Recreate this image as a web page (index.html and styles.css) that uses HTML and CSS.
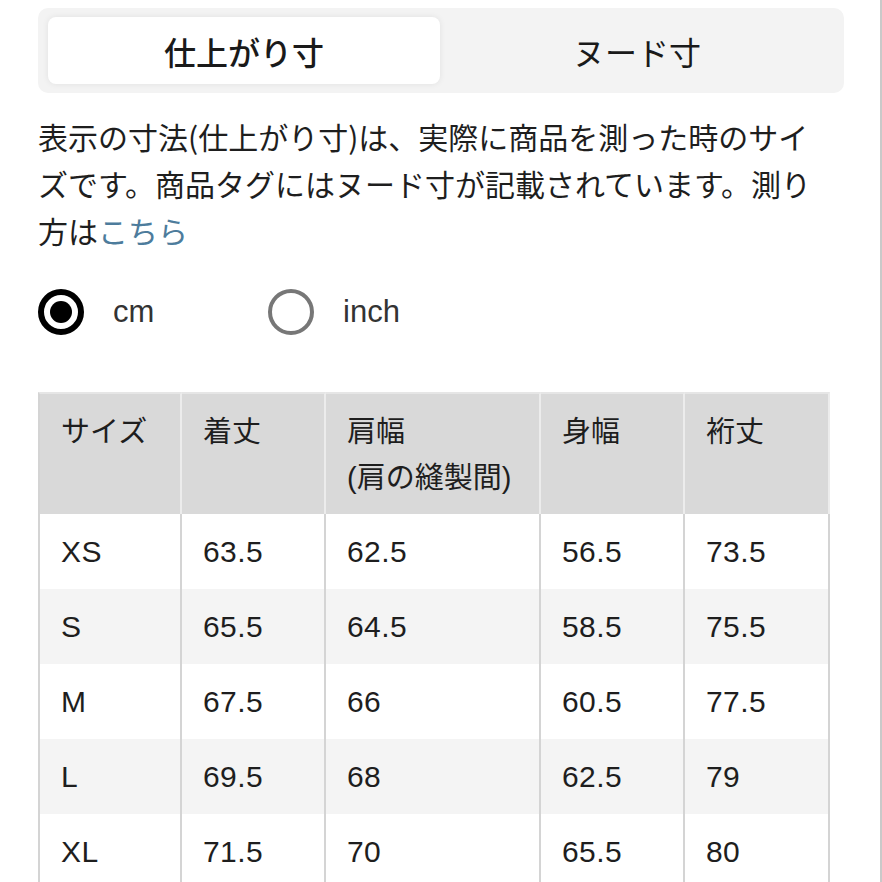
FILE: index.html
```html
<!DOCTYPE html>
<html lang="ja">
<head>
<meta charset="utf-8">
<link rel="stylesheet" href="styles.css">
</head>
<body>
<div class="page">
  <div class="segment">
    <div class="seg-tab active">仕上がり寸</div>
    <div class="seg-tab">ヌード寸</div>
  </div>
  <p class="note">表示の寸法(仕上がり寸)は、実際に商品を測った時のサイ<br>ズです。商品タグにはヌード寸が記載されています。測り<br>方は<a class="link" href="#">こちら</a></p>
  <div class="units">
    <div class="unit"><span class="radio checked"><span class="dot"></span></span><span class="unit-label">cm</span></div>
    <div class="unit"><span class="radio"></span><span class="unit-label">inch</span></div>
  </div>
  <table class="sizes">
    <thead>
      <tr>
        <th class="c1">サイズ</th>
        <th class="c2">着丈</th>
        <th class="c3">肩幅<br>(肩の縫製間)</th>
        <th class="c4">身幅</th>
        <th class="c5">裄丈</th>
      </tr>
    </thead>
    <tbody>
      <tr><td>XS</td><td>63.5</td><td>62.5</td><td>56.5</td><td>73.5</td></tr>
      <tr><td>S</td><td>65.5</td><td>64.5</td><td>58.5</td><td>75.5</td></tr>
      <tr><td>M</td><td>67.5</td><td>66</td><td>60.5</td><td>77.5</td></tr>
      <tr><td>L</td><td>69.5</td><td>68</td><td>62.5</td><td>79</td></tr>
      <tr><td>XL</td><td>71.5</td><td>70</td><td>65.5</td><td>80</td></tr>
    </tbody>
  </table>
</div>
</body>
</html>
```

FILE: styles.css
```css
html, body {
  margin: 0;
  padding: 0;
  background: #fff;
}
body {
  min-height: 100vh;
  overflow: hidden;
  box-shadow: inset -2px 0 0 #c9c9c9;
  font-family: "Liberation Sans", "Noto Sans CJK JP", sans-serif;
  color: #1e1e1e;
}
.page {
  width: 806px;
  padding: 8px 0 0 38px;
}
.segment {
  display: grid;
  grid-template-columns: 392px 1fr;
  height: 85px;
  box-sizing: border-box;
  padding: 9px 10px;
  background: #f3f3f3;
  border-radius: 10px;
}
.seg-tab {
  display: flex;
  align-items: center;
  justify-content: center;
  font-family: "Noto Sans CJK JP", sans-serif;
  font-size: 32px;
  color: #1a1a1a;
}
.seg-tab.active {
  background: #fff;
  border-radius: 8px;
  font-weight: 500;
  box-shadow: 0 0 6px rgba(0, 0, 0, 0.08);
}
.note {
  margin: 20px 0 0;
  font-family: "Noto Sans CJK JP", sans-serif;
  font-size: 30px;
  line-height: 47px;
  white-space: nowrap;
  color: #1e1e1e;
}
.link {
  color: #4d7c9c;
  text-decoration: none;
}
.units {
  display: flex;
  margin-top: 34px;
  height: 48px;
  align-items: center;
}
.unit {
  display: flex;
  align-items: center;
  width: 230px;
}
.radio {
  width: 46px;
  height: 46px;
  box-sizing: border-box;
  border: 4px solid #777;
  border-radius: 50%;
  display: flex;
  align-items: center;
  justify-content: center;
}
.radio.checked {
  border: 6px solid #000;
}
.dot {
  width: 22px;
  height: 22px;
  border-radius: 50%;
  background: #000;
}
.unit-label {
  margin-left: 29px;
  font-size: 31px;
  color: #333;
}
.sizes {
  margin-top: 56px;
  width: 792px;
  border-collapse: separate;
  border-spacing: 0;
  table-layout: fixed;
  font-size: 29px;
  color: #1e1e1e;
}
.c1 { width: 144px; }
.c2 { width: 144px; }
.c3 { width: 215px; }
.c4 { width: 144px; }
.c5 { width: 145px; }
.sizes th {
  height: 122px;
  box-sizing: border-box;
  padding: 15px 6px 0 21px;
  vertical-align: top;
  text-align: left;
  font-weight: normal;
  line-height: 46px;
  background: #d9d9d9;
  border-top: 2px solid #e6e6e6;
  border-right: 2px solid #ececec;
}
.sizes th:first-child {
  border-left: 2px solid #d4d4d4;
}
.sizes td {
  height: 75px;
  box-sizing: border-box;
  padding: 0 6px 0 21px;
  vertical-align: middle;
  font-size: 30px;
  letter-spacing: 0.4px;
  border-right: 2px solid #d4d4d4;
}
.sizes td:first-child {
  border-left: 2px solid #d4d4d4;
}
.sizes tbody tr:nth-child(even) td {
  background: #f4f4f4;
}
```
